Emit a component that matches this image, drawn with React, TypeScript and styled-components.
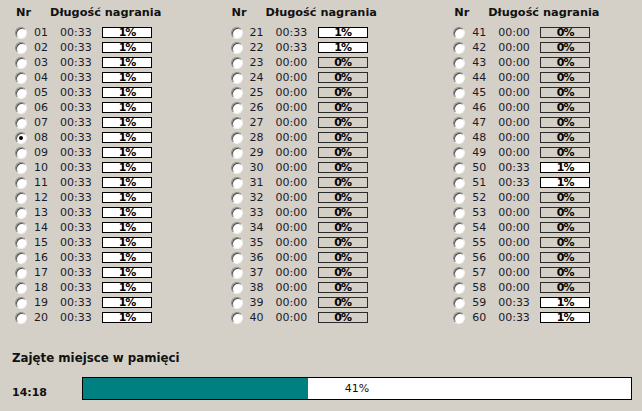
import React from 'react';
import styled, { createGlobalStyle } from 'styled-components';

const GlobalStyle = createGlobalStyle`
  html, body {
    margin: 0;
    padding: 0;
    background: #d4d0c8;
  }
  body {
    font-family: "DejaVu Sans", Verdana, sans-serif;
    font-size: 11px;
    color: #000;
  }
`;

type Track = { nr: number; time: string; pct: number };

const used = new Set([...Array.from({ length: 22 }, (_, i) => i + 1), 50, 51, 59, 60]);

const tracks: Track[] = Array.from({ length: 60 }, (_, i) => {
  const nr = i + 1;
  const on = used.has(nr);
  return { nr, time: on ? '00:33' : '00:00', pct: on ? 1 : 0 };
});

const columns = [
  { width: 217, items: tracks.slice(0, 20) },
  { width: 224, items: tracks.slice(20, 40) },
  { width: 180, items: tracks.slice(40, 60) },
];

const SELECTED = 8;
const MEMORY = 41;

export default function App() {
  return (
    <>
      <GlobalStyle />
      <Window>
        <Columns>
          {columns.map((col, ci) => (
            <Column key={ci} $width={col.width}>
              <HeaderRow>
                <span>Nr</span>
                <span>Długość nagrania</span>
              </HeaderRow>
              {col.items.map(t => (
                <Row key={t.nr}>
                  <Radio $checked={t.nr === SELECTED} />
                  <span>{String(t.nr).padStart(2, '0')}</span>
                  <span>{t.time}</span>
                  <Level $filled={t.pct > 0}>{t.pct}%</Level>
                </Row>
              ))}
            </Column>
          ))}
        </Columns>
        <MemoryTitle>Zajęte miejsce w pamięci</MemoryTitle>
        <MemoryRow>
          <TimeLabel>14:18</TimeLabel>
          <MemoryBar>
            <MemoryFill style={{ width: `${MEMORY}%` }} />
            <MemoryText>{MEMORY}%</MemoryText>
          </MemoryBar>
        </MemoryRow>
      </Window>
    </>
  );
}

const Window = styled.div`
  width: 642px;
  height: 411px;
  box-sizing: border-box;
  padding: 4px 10px 0 12px;
  display: flex;
  flex-direction: column;
`;

const Columns = styled.div`
  display: flex;
  padding-left: 3px;
`;

const Column = styled.div<{ $width: number }>`
  width: ${p => p.$width}px;
  display: flex;
  flex-direction: column;
`;

const HeaderRow = styled.div`
  display: grid;
  grid-template-columns: 34px auto;
  padding-left: 1px;
  height: 21px;
  line-height: 18px;
  font-size: 11.3px;
  font-weight: bold;
  color: #111;
`;

const Row = styled.div`
  display: grid;
  grid-template-columns: 19px 26px 42px 50px;
  align-items: center;
  height: 15px;
  color: #1a1a2a;
`;

const Radio = styled.span<{ $checked: boolean }>`
  width: 12px;
  height: 12px;
  box-sizing: border-box;
  border-radius: 50%;
  background: #fff;
  border: 1px solid;
  border-color: #8c8a85 #f2f1ee #f2f1ee #8c8a85;
  box-shadow: inset 1px 1px 0 #505050;
  display: flex;
  align-items: center;
  justify-content: center;
  &::after {
    content: '';
    width: 4px;
    height: 4px;
    border-radius: 50%;
    background: #000;
    display: ${p => (p.$checked ? 'block' : 'none')};
  }
`;

const Level = styled.span<{ $filled: boolean }>`
  width: 50px;
  height: 11px;
  box-sizing: border-box;
  border: 1px solid ${p => (p.$filled ? '#000' : '#2a2a2a')};
  background: ${p => (p.$filled ? '#fff' : '#d4d0c8')};
  font-weight: bold;
  font-size: 11px;
  line-height: 9px;
  letter-spacing: -1px;
  text-align: center;
  color: #000;
`;

const MemoryTitle = styled.div`
  margin-top: 25px;
  font-size: 11.8px;
  font-weight: bold;
  line-height: 16px;
  color: #111;
`;

const MemoryRow = styled.div`
  display: flex;
  margin-top: 11px;
`;

const TimeLabel = styled.div`
  width: 70px;
  padding-top: 8px;
  font-weight: bold;
  line-height: 15px;
  color: #111;
`;

const MemoryBar = styled.div`
  position: relative;
  flex: 1;
  height: 23px;
  box-sizing: border-box;
  border: 1px solid #000;
  background: #fff;
`;

const MemoryFill = styled.div`
  height: 100%;
  background: #008080;
`;

const MemoryText = styled.span`
  position: absolute;
  inset: 0;
  display: flex;
  align-items: center;
  justify-content: center;
  color: #220a00;
`;
